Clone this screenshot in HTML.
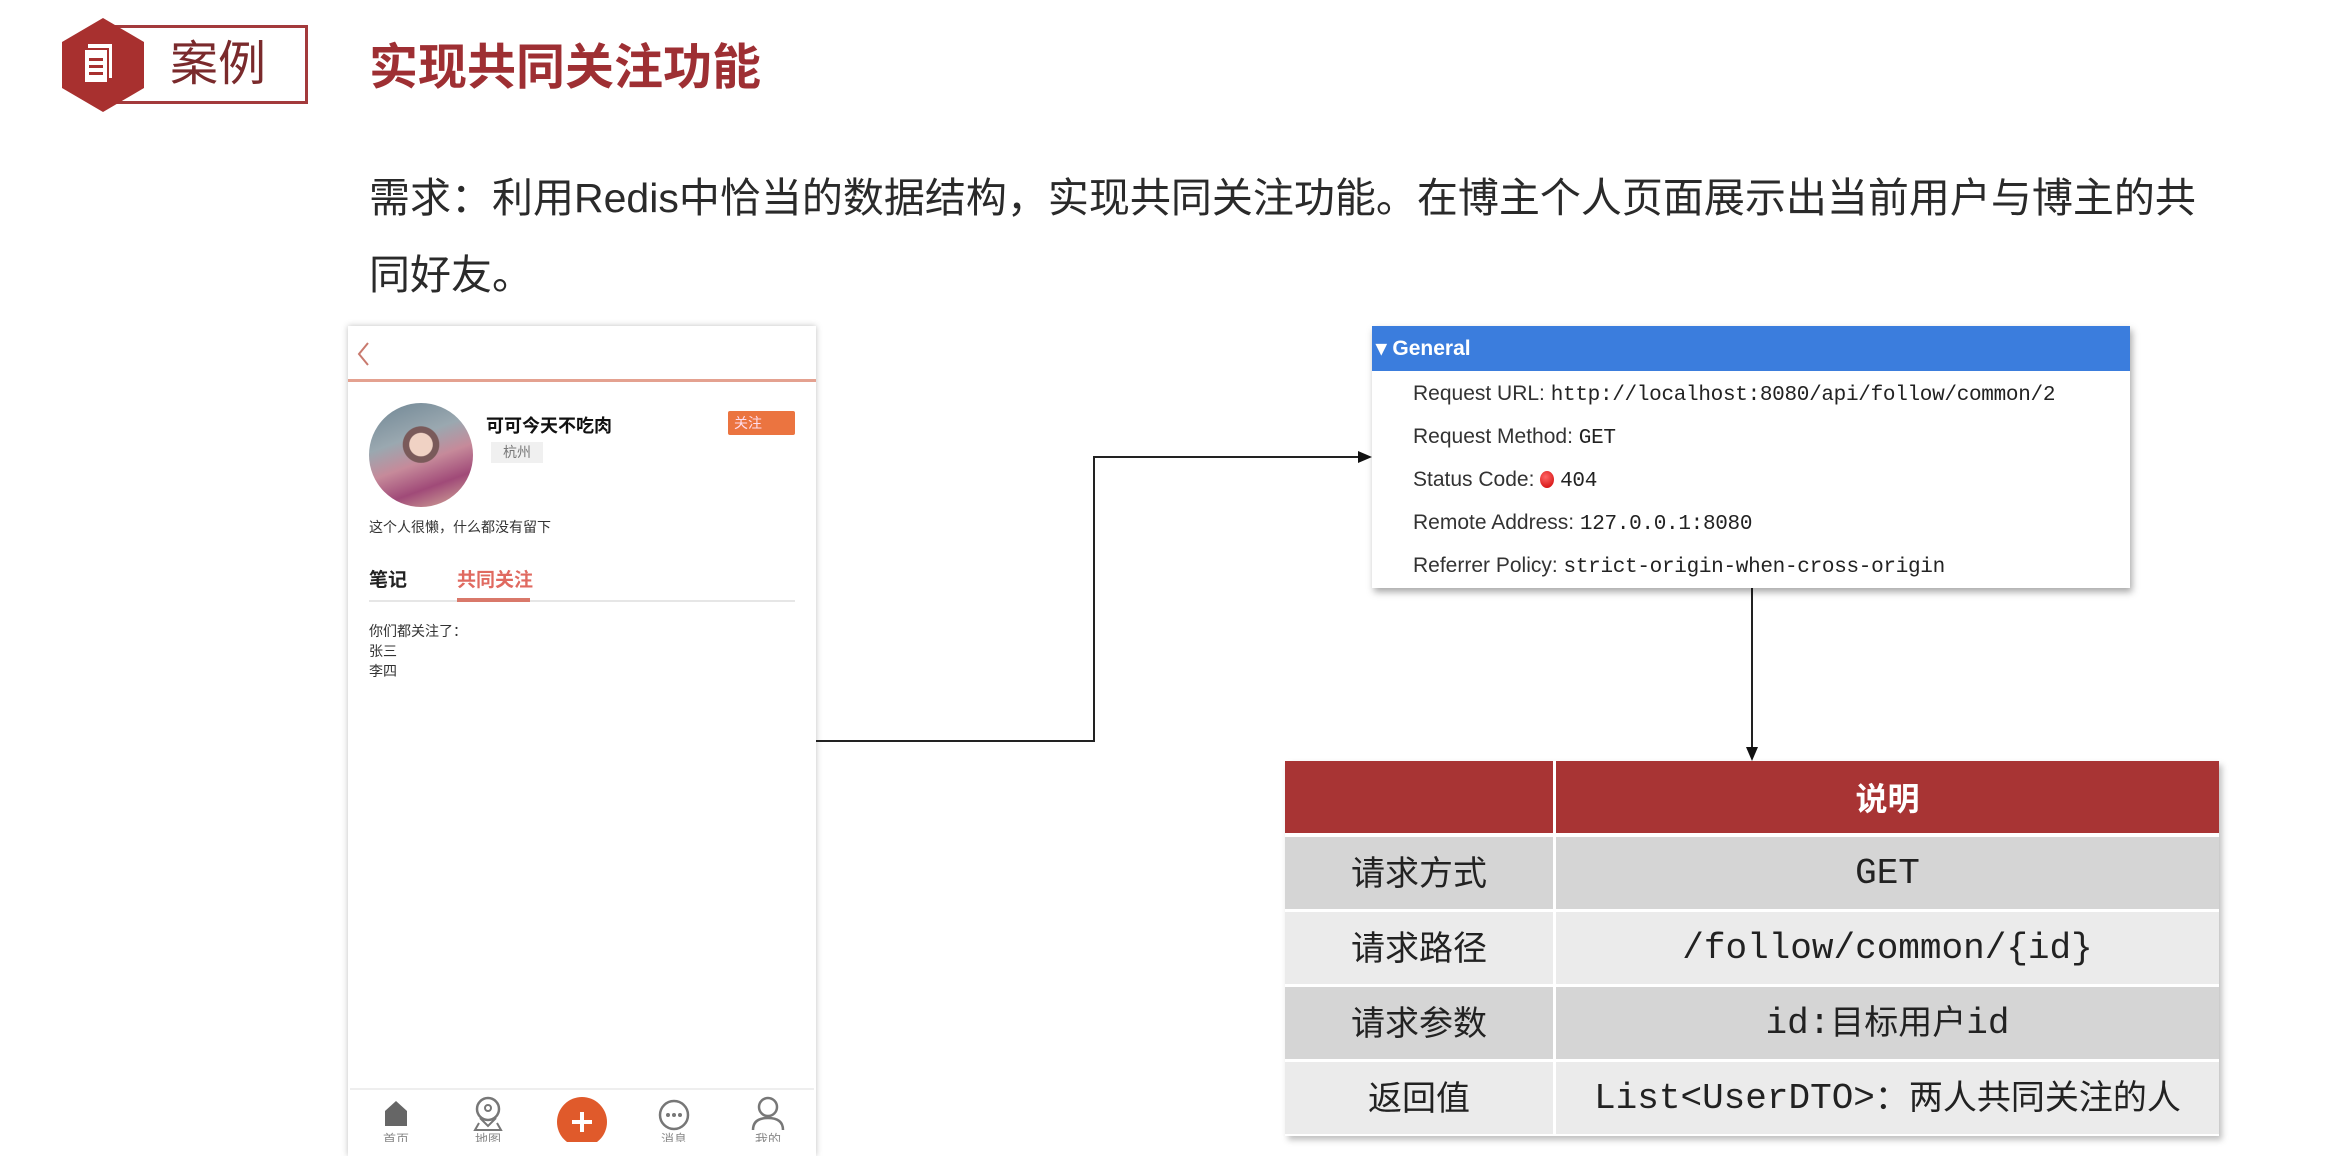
<!DOCTYPE html>
<html><head><meta charset="utf-8"><style>
*{margin:0;padding:0;box-sizing:border-box}
body{width:2334px;height:1142px;background:#fff;position:relative;overflow:hidden;font-family:"Liberation Sans","Noto Sans CJK SC",sans-serif;color:#222}
.abs{position:absolute}
.mono{font-family:"Liberation Mono","DejaVu Sans Mono",monospace}
.gen div.r{position:absolute;left:41px;font-size:21px;color:#333;white-space:nowrap}
.gen .mono{font-size:21px;letter-spacing:-0.3px;color:#222}
.row{position:absolute;left:0;width:934px;height:72px;display:flex}
.row div{height:72px;display:flex;align-items:center;justify-content:center;font-size:34px;color:#222}
.c1{width:268px;padding-bottom:6px}.c2{width:663px;margin-left:3px}
.cx{position:relative;top:-4px}
</style></head><body>
<div class="abs" style="left:112px;top:25px;width:196px;height:79px;border:3px solid #a33a3c"></div>
<svg class="abs" style="left:58px;top:16px" width="90" height="98" viewBox="0 0 90 98"><polygon points="45,2 86,26 86,72 45,96 4,72 4,26" fill="#a8302f"/><rect x="30" y="28" width="24" height="34" fill="#fff"/><rect x="26" y="33" width="24" height="34" fill="#fff" stroke="#a8302f" stroke-width="2"/><rect x="31" y="42" width="14" height="3" fill="#a8302f"/><rect x="31" y="49" width="14" height="3" fill="#a8302f"/><rect x="31" y="56" width="14" height="3" fill="#a8302f"/></svg>
<div class="abs" style="left:170px;top:33px;font-size:48px;color:#7a2a2c;line-height:64px">案例</div>
<div class="abs" style="left:369px;top:36px;font-size:49px;font-weight:bold;color:#9e2f33;line-height:64px">实现共同关注功能</div>
<div class="abs" style="left:369px;top:160px;font-size:41px;line-height:77px;color:#2a2a2a;white-space:nowrap">需求：利用Redis中恰当的数据结构，实现共同关注功能。在博主个人页面展示出当前用户与博主的共<br>同好友。</div>

<div class="abs" style="left:348px;top:326px;width:468px;height:830px;background:#fff;box-shadow:0 0 6px rgba(0,0,0,.25)"></div>
<svg class="abs" style="left:354px;top:340px" width="20" height="28"><path d="M14 3 L5 14 L14 25" stroke="#c97a6e" stroke-width="2" fill="none"/></svg>
<div class="abs" style="left:348px;top:379px;width:468px;height:3px;background:#e4a190"></div>
<div class="abs" style="left:369px;top:403px;width:104px;height:104px;border-radius:50%;background:radial-gradient(circle at 50% 40%,#f0d2c4 0 14%,#7a5a5a 15% 22%,transparent 23%),linear-gradient(160deg,#6f8694 0%,#9aa8b0 35%,#c68a9a 55%,#a04a78 75%,#d9b49c 100%)"></div>
<div class="abs" style="left:486px;top:412px;font-size:18px;font-weight:bold;color:#111">可可今天不吃肉</div>
<div class="abs" style="left:491px;top:442px;width:52px;height:21px;background:#f0f0f0;font-size:14px;color:#777;text-align:center;line-height:21px">杭州</div>
<div class="abs" style="left:728px;top:411px;width:67px;height:24px;background:#eb7440;border-radius:2px;font-size:14px;color:#fde;padding-left:6px;line-height:24px">关注</div>
<div class="abs" style="left:369px;top:517px;font-size:14px;color:#333">这个人很懒，什么都没有留下</div>
<div class="abs" style="left:369px;top:565px;font-size:19px;font-weight:bold;color:#222">笔记</div>
<div class="abs" style="left:457px;top:565px;font-size:19px;font-weight:bold;color:#e06a60">共同关注</div>
<div class="abs" style="left:369px;top:600px;width:426px;height:2px;background:#e6e6e6"></div>
<div class="abs" style="left:457px;top:598px;width:73px;height:4px;background:#d9786a"></div>
<div class="abs" style="left:369px;top:621px;font-size:14px;line-height:20px;color:#333">你们都关注了：<br>张三<br>李四</div>
<div class="abs" style="left:350px;top:1088px;width:464px;height:2px;background:#eee"></div>
<svg class="abs" style="left:348px;top:1090px" width="468" height="52">
<path d="M37 21 L48 11 L59 21 L59 36 L37 36 Z" fill="#666"/>
<circle cx="140" cy="19" r="11" fill="none" stroke="#777" stroke-width="2.5"/><circle cx="140" cy="18" r="3" fill="none" stroke="#777" stroke-width="2"/><path d="M132 28 L140 36 L148 28 M131 33 L127 40 L153 40 L149 33" fill="none" stroke="#777" stroke-width="2"/>
<circle cx="234" cy="32" r="25" fill="#e05a2b"/><path d="M234 22 V42 M224 32 H244" stroke="#fff" stroke-width="4"/>
<circle cx="326" cy="25" r="14" fill="none" stroke="#777" stroke-width="2.5"/><circle cx="320" cy="25" r="2" fill="#777"/><circle cx="326" cy="25" r="2" fill="#777"/><circle cx="332" cy="25" r="2" fill="#777"/>
<circle cx="420" cy="17" r="9" fill="none" stroke="#777" stroke-width="2.5"/><path d="M405 40 Q405 28 420 28 Q435 28 435 40" fill="none" stroke="#777" stroke-width="2.5"/>
<text x="48" y="54" font-size="13" fill="#888" text-anchor="middle">首页</text><text x="140" y="54" font-size="13" fill="#888" text-anchor="middle">地图</text><text x="326" y="54" font-size="13" fill="#888" text-anchor="middle">消息</text><text x="420" y="54" font-size="13" fill="#888" text-anchor="middle">我的</text>
</svg>

<svg class="abs" style="left:0;top:0" width="2334" height="1142">
<path d="M816 741 H1094 V457 H1362" fill="none" stroke="#222" stroke-width="2"/>
<polygon points="1372,457 1358,451 1358,463" fill="#111"/>
<path d="M1752 588 V750" stroke="#222" stroke-width="2"/>
<polygon points="1752,761 1746,747 1758,747" fill="#111"/>
</svg>

<div class="abs gen" style="left:1372px;top:326px;width:758px;height:262px;background:#fff;box-shadow:2px 4px 7px rgba(0,0,0,.35)">
<div style="position:absolute;left:0;top:0;width:758px;height:45px;background:#3b7ddd;color:#fff;font-weight:bold;font-size:21px;line-height:45px;padding-left:4px">▾ General</div>
<div class="r" style="top:56px">Request URL: <span class="mono">http://localhost:8080/api/follow/common/2</span></div>
<div class="r" style="top:99px">Request Method: <span class="mono">GET</span></div>
<div class="r" style="top:142px">Status Code: <span style="display:inline-block;width:14px;height:17px;border-radius:50%;background:radial-gradient(circle at 40% 35%,#f66,#c00);vertical-align:-2px"></span> <span class="mono">404</span></div>
<div class="r" style="top:185px">Remote Address: <span class="mono">127.0.0.1:8080</span></div>
<div class="r" style="top:228px">Referrer Policy: <span class="mono">strict-origin-when-cross-origin</span></div>
</div>

<div class="abs" style="left:1285px;top:761px;width:934px;height:375px;box-shadow:3px 4px 6px rgba(0,0,0,.25);background:#fff">
<div class="row" style="top:0"><div class="c1" style="background:#a83434;padding:0"></div><div class="c2" style="background:#a83434;color:#fff;font-weight:bold;font-size:32px">说明</div></div>
<div class="row" style="top:76px"><div class="c1" style="background:#d5d5d5">请求方式</div><div class="c2 mono" style="background:#d5d5d5;font-size:36px">GET</div></div>
<div class="row" style="top:151px"><div class="c1" style="background:#ebebeb">请求路径</div><div class="c2 mono" style="background:#ebebeb;font-size:36px">/follow/common/{id}</div></div>
<div class="row" style="top:226px"><div class="c1" style="background:#d5d5d5">请求参数</div><div class="c2" style="background:#d5d5d5"><span class="mono" style="font-size:36px">id:</span><span class="cx">目标用户</span><span class="mono" style="font-size:36px">id</span></div></div>
<div class="row" style="top:301px"><div class="c1" style="background:#ebebeb">返回值</div><div class="c2" style="background:#ebebeb"><span class="mono" style="font-size:36px">List&lt;UserDTO&gt;</span><span class="cx">：两人共同关注的人</span></div></div>
</div>
</body></html>
